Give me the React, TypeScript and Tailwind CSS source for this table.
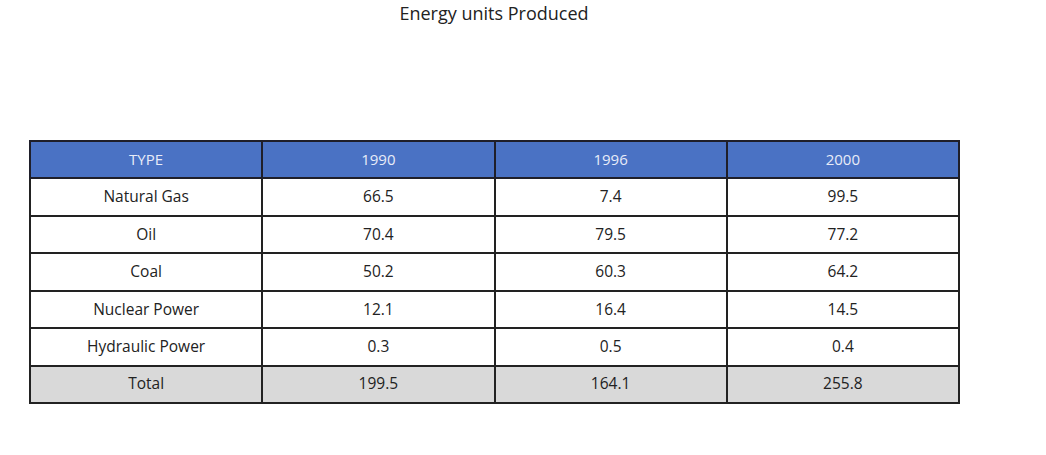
const rows = [
  { type: 'Natural Gas', a: '66.5', b: '7.4', c: '99.5' },
  { type: 'Oil', a: '70.4', b: '79.5', c: '77.2' },
  { type: 'Coal', a: '50.2', b: '60.3', c: '64.2' },
  { type: 'Nuclear Power', a: '12.1', b: '16.4', c: '14.5' },
  { type: 'Hydraulic Power', a: '0.3', b: '0.5', c: '0.4' },
]

export default function App() {
  return (
    <div className="w-[1046px] h-[455px] bg-white font-['Open_Sans',sans-serif] text-[#222]">
      <h1 className="pt-[2px] h-[140px] text-center text-[18px] leading-[22px] mr-[58px]">
        Energy units Produced
      </h1>
      <table className="ml-[29px] w-[931px] border-collapse table-fixed text-[15.5px]">
        <thead>
          <tr className="bg-[#4a72c4] text-[#e8ecf8] h-[37px]">
            <th className="border-2 border-[#1f1f2a] font-normal text-[15px]">TYPE</th>
            <th className="border-2 border-[#1f1f2a] font-normal text-[15px]">1990</th>
            <th className="border-2 border-[#1f1f2a] font-normal text-[15px]">1996</th>
            <th className="border-2 border-[#1f1f2a] font-normal text-[15px]">2000</th>
          </tr>
        </thead>
        <tbody>
          {rows.map((r) => (
            <tr key={r.type} className="h-[37.5px]">
              <td className="border-2 border-[#222] text-center">{r.type}</td>
              <td className="border-2 border-[#222] text-center">{r.a}</td>
              <td className="border-2 border-[#222] text-center">{r.b}</td>
              <td className="border-2 border-[#222] text-center">{r.c}</td>
            </tr>
          ))}
          <tr className="h-[37px] bg-[#d9d9d9]">
            <td className="border-2 border-[#222] text-center">Total</td>
            <td className="border-2 border-[#222] text-center">199.5</td>
            <td className="border-2 border-[#222] text-center">164.1</td>
            <td className="border-2 border-[#222] text-center">255.8</td>
          </tr>
        </tbody>
      </table>
    </div>
  )
}
